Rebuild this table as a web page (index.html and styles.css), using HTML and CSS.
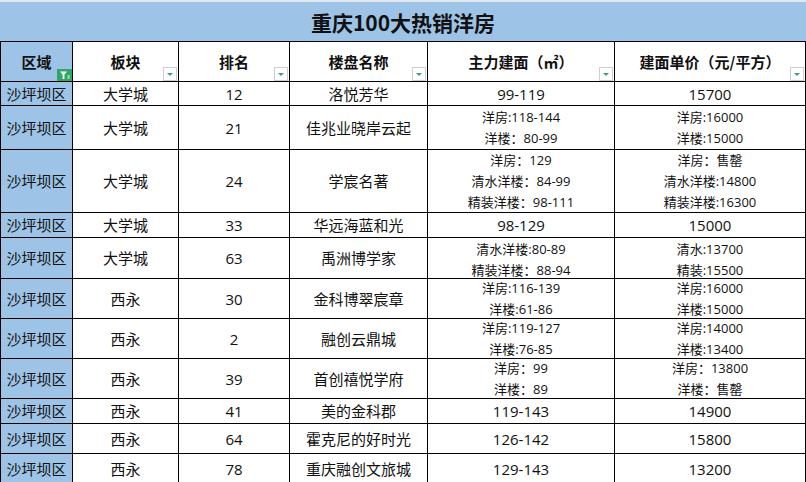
FILE: index.html
```html
<!DOCTYPE html>
<html lang="zh-CN">
<head>
<meta charset="utf-8">
<title>重庆100大热销洋房</title>
<link rel="stylesheet" href="styles.css">
</head>
<body>
<div class="sheet">
  <div class="topstrip"></div>
  <div class="title">重庆100大热销洋房</div>
  <table class="grid">
    <colgroup>
      <col class="c1"><col class="c2"><col class="c3"><col class="c4"><col class="c5"><col class="c6">
    </colgroup>
    <thead>
      <tr class="r40">
        <th class="area">区域<span class="filter-on"><svg width="15" height="12" viewBox="0 0 15 12"><path d="M3 2.5h7l-2.6 3.3v4.2h-1.8v-4.2z" fill="#fff"/><rect x="10.5" y="6.5" width="2.2" height="1" fill="#fff"/><rect x="10.5" y="8.5" width="2.2" height="1" fill="#fff"/></svg></span></th>
        <th>板块<span class="dd"></span></th>
        <th>排名<span class="dd"></span></th>
        <th>楼盘名称<span class="dd"></span></th>
        <th>主力建面（㎡）<span class="dd"></span></th>
        <th>建面单价（元/平方）<span class="dd"></span></th>
      </tr>
    </thead>
    <tbody>
      <tr class="r24"><td class="area">沙坪坝区</td><td>大学城</td><td>12</td><td>洛悦芳华</td><td>99-119</td><td>15700</td></tr>
      <tr class="r44"><td class="area">沙坪坝区</td><td>大学城</td><td>21</td><td>佳兆业晓岸云起</td>
        <td class="ml"><div class="stack"><span>洋房:118-144</span><span>洋楼：80-99</span></div></td>
        <td class="ml"><div class="stack"><span>洋房:16000</span><span>洋楼:15000</span></div></td></tr>
      <tr class="r63"><td class="area">沙坪坝区</td><td>大学城</td><td>24</td><td>学宸名著</td>
        <td class="ml"><div class="stack three"><span>洋房：129</span><span>清水洋楼：84-99</span><span>精装洋楼：98-111</span></div></td>
        <td class="ml"><div class="stack three"><span>洋房：售罄</span><span>清水洋楼:14800</span><span>精装洋楼:16300</span></div></td></tr>
      <tr class="r25"><td class="area">沙坪坝区</td><td>大学城</td><td>33</td><td>华远海蓝和光</td><td>98-129</td><td>15000</td></tr>
      <tr class="r41"><td class="area">沙坪坝区</td><td>大学城</td><td>63</td><td>禹洲博学家</td>
        <td class="ml"><div class="stack low"><span>清水洋楼:80-89</span><span>精装洋楼：88-94</span></div></td>
        <td class="ml"><div class="stack low"><span>清水:13700</span><span>精装:15500</span></div></td></tr>
      <tr class="r40"><td class="area">沙坪坝区</td><td>西永</td><td>30</td><td>金科博翠宸章</td>
        <td class="ml"><div class="stack"><span>洋房:116-139</span><span>洋楼:61-86</span></div></td>
        <td class="ml"><div class="stack"><span>洋房:16000</span><span>洋楼:15000</span></div></td></tr>
      <tr class="r40"><td class="area">沙坪坝区</td><td>西永</td><td>2</td><td>融创云鼎城</td>
        <td class="ml"><div class="stack"><span>洋房:119-127</span><span>洋楼:76-85</span></div></td>
        <td class="ml"><div class="stack"><span>洋房:14000</span><span>洋楼:13400</span></div></td></tr>
      <tr class="r40"><td class="area">沙坪坝区</td><td>西永</td><td>39</td><td>首创禧悦学府</td>
        <td class="ml"><div class="stack"><span>洋房：99</span><span>洋楼：89</span></div></td>
        <td class="ml"><div class="stack"><span>洋房：13800</span><span>洋楼：售罄</span></div></td></tr>
      <tr class="r25"><td class="area">沙坪坝区</td><td>西永</td><td>41</td><td>美的金科郡</td><td>119-143</td><td>14900</td></tr>
      <tr class="r30"><td class="area">沙坪坝区</td><td>西永</td><td>64</td><td>霍克尼的好时光</td><td>126-142</td><td>15800</td></tr>
      <tr class="r30"><td class="area">沙坪坝区</td><td>西永</td><td>78</td><td>重庆融创文旅城</td><td>129-143</td><td>13200</td></tr>
    </tbody>
  </table>
</div>
</body>
</html>
```
FILE: styles.css
```css
html, body {
  margin: 0;
  padding: 0;
  background: #fff;
}
body {
  font-family: "Open Sans", "Noto Sans CJK SC", sans-serif;
  color: #111;
}
.sheet {
  width: 806px;
  height: 482px;
  overflow: hidden;
}
.topstrip {
  height: 2px;
  background: #e3e8ee;
}
.title {
  height: 39px;
  background: #9dc3e6;
  display: flex;
  align-items: center;
  justify-content: center;
  font-family: "Noto Sans CJK SC", sans-serif;
  font-weight: bold;
  font-size: 21px;
  color: #111;
}
.grid {
  border-collapse: collapse;
  table-layout: fixed;
  width: 805px;
}
.c1 { width: 72px; }
.c2 { width: 106px; }
.c3 { width: 111px; }
.c4 { width: 138px; }
.c5 { width: 187px; }
.c6 { width: 191px; }
.grid th,
.grid td {
  border: 1px solid #000;
  padding: 0;
  text-align: center;
  vertical-align: middle;
  font-size: 15px;
  line-height: 20px;
  white-space: nowrap;
  overflow: visible;
}
.grid th {
  position: relative;
  font-family: "Noto Sans CJK SC", sans-serif;
  font-weight: bold;
  font-size: 15px;
}
.grid .area {
  background: #9dc3e6;
}
.grid td.ml {
  font-size: 13px;
  line-height: 21px;
}
.stack {
  height: 34px;
  display: flex;
  flex-direction: column;
  justify-content: center;
  align-items: center;
}
.stack.three {
  height: 58px;
}
.stack.low {
  padding-top: 3px;
}
.stack span {
  display: block;
  flex: none;
}
.r24 { height: 24px; }
.r25 { height: 25px; }
.r30 { height: 30px; }
.r40 { height: 40px; }
.r41 { height: 41px; }
.r44 { height: 44px; }
.r63 { height: 63px; }
.dd {
  position: absolute;
  right: 1px;
  bottom: 0;
  width: 12px;
  height: 12px;
  border: 1px solid #cfcfcf;
  background: #fff;
}
.dd::after {
  content: "";
  position: absolute;
  left: 3px;
  top: 5px;
  border-left: 3px solid transparent;
  border-right: 3px solid transparent;
  border-top: 3px solid #3f9a8c;
}
.filter-on {
  position: absolute;
  right: 0;
  bottom: 0;
  width: 15px;
  height: 12px;
  background: #2fa866;
  display: flex;
}
```
